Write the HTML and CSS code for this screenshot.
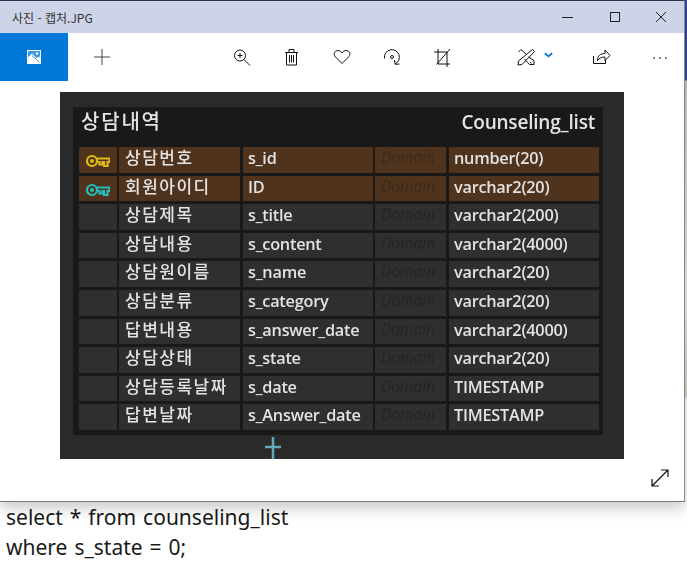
FILE: index.html
```html
<!DOCTYPE html>
<html lang="ko">
<head>
<meta charset="utf-8">
<title>사진 - 캡처.JPG</title>
<link rel="stylesheet" href="styles.css">
</head>
<body>
<div class="desktop">
  <main class="window">
    <header class="titlebar">
      <span class="app-title">사진 - 캡처.JPG</span>
      <div class="controls">
        <svg class="ctl" viewBox="0 0 20 20"><path d="M4 10.500h11"/></svg>
        <svg class="ctl" viewBox="0 0 20 20"><rect x="5.500" y="5.500" width="9" height="9"/></svg>
        <svg class="ctl" viewBox="0 0 20 20"><path d="M5 5l10 10M15 5L5 15"/></svg>
      </div>
    </header>
    <nav class="toolbar">
      <div class="tile">
        <svg class="tile-icon" viewBox="0 0 14 14"><rect width="14" height="14" fill="#fff"/><rect x="1" y="1" width="12" height="7" fill="#3f97e0"/><circle cx="10" cy="3.500" r="1.300" fill="#fff"/><path d="M1 7.500L5 3.500 9.500 8 13 6.500V13H1z" fill="#fff"/><path d="M5 5.500L12 12" stroke="#3f97e0" fill="none"/></svg>
      </div>
      <button class="btn btn-add"><svg class="ico thin" viewBox="0 0 20 20"><path d="M10 2v16M2 10h16"/></svg></button>
      <div class="group">
        <button class="btn"><svg class="ico" viewBox="0 0 20 20"><circle cx="8" cy="8.500" r="5.500"/><path d="M12 12.500L18 18.500M8 6v5M5.500 8.500h5"/></svg></button>
        <button class="btn"><svg class="ico" viewBox="0 0 20 20"><path d="M3 5.500h13M7 5.500v-3h5v3M4.500 5.500v12.500h10V5.500M7.500 8v7.500M9.500 8v7.500M11.500 8v7.500"/></svg></button>
        <button class="btn"><svg class="ico" viewBox="0 0 20 20"><path d="M10 16.500L3.500 10C1.500 8 2 5 4 4c2.200-1.100 4.500-.3 6 2 1.500-2.300 3.800-3.100 6-2 2 1 2.500 4 .5 6z"/></svg></button>
        <button class="btn"><svg class="ico" viewBox="0 0 20 20"><path d="M2.500 11.500A7.500 7.500 0 1 1 13 17M12.500 13l.7 4.300 4.300-.3"/><circle cx="10" cy="10" r="1.500"/></svg></button>
        <button class="btn"><svg class="ico" viewBox="0 0 20 20"><path d="M6 2v15h12M2 5h13v15M4.500 17.500L18 2"/></svg></button>
      </div>
      <div class="edit">
        <svg class="ico" viewBox="0 0 20 20"><path d="M2.500 5L5 2.500l5.500 5M12.500 10l5.500 3.500v4h-4.500L8.500 12M14 15l1.500 1.500M16.500 2.500L18.500 4.500 6 17.500 2 18l.5-4z"/></svg>
        <svg class="chev" viewBox="0 0 10 6"><path d="M1 1l4 3.500L9 1"/></svg>
      </div>
      <button class="btn"><svg class="ico" viewBox="0 0 20 20"><path d="M2.500 9v7.500h12V13M6.500 13.500c0-5 3-7 7.500-7V3l5 5.500-5 5v-3.500c-3.500 0-5.500 1-7.500 3.500z"/></svg></button>
      <button class="btn btn-more"><svg class="ico" viewBox="0 0 20 20"><path class="dots" d="M3.500 11H5M9.250 11h1.500M15 11h1.500"/></svg></button>
    </nav>
    <section class="canvas">
      <div class="shot">
        <div class="panel">
          <div class="panel-head"><span class="ko-title">상담내역</span><span class="en-title">Counseling_list</span></div>
          <div class="table">
            <div class="cell pk"><svg class="key key-gold" viewBox="0 0 24 14"><circle cx="6" cy="7" r="5"/><circle cx="6" cy="7" r="1"/><path d="M11 4.500H23.500v3.500h-2v4h-3.500v-4h-1.500v2.500h-3v-2.500h-2"/></svg></div>
            <div class="cell pk ko">상담번호</div><div class="cell pk en">s_id</div><div class="cell pk dom">Domain</div><div class="cell pk en">number(20)</div>
            <div class="cell pk"><svg class="key key-teal" viewBox="0 0 24 14"><circle cx="6" cy="7" r="5"/><circle cx="6" cy="7" r="1"/><path d="M11 4.500H23.500v3.500h-2v4h-3.500v-4h-1.500v2.500h-3v-2.500h-2"/></svg></div>
            <div class="cell pk ko">회원아이디</div><div class="cell pk en">ID</div><div class="cell pk dom">Domain</div><div class="cell pk en">varchar2(20)</div>
            <div class="cell"></div><div class="cell ko">상담제목</div><div class="cell en">s_title</div><div class="cell dom">Domain</div><div class="cell en">varchar2(200)</div>
            <div class="cell"></div><div class="cell ko">상담내용</div><div class="cell en">s_content</div><div class="cell dom">Domain</div><div class="cell en">varchar2(4000)</div>
            <div class="cell"></div><div class="cell ko">상담원이름</div><div class="cell en">s_name</div><div class="cell dom">Domain</div><div class="cell en">varchar2(20)</div>
            <div class="cell"></div><div class="cell ko">상담분류</div><div class="cell en">s_category</div><div class="cell dom">Domain</div><div class="cell en">varchar2(20)</div>
            <div class="cell"></div><div class="cell ko">답변내용</div><div class="cell en">s_answer_date</div><div class="cell dom">Domain</div><div class="cell en">varchar2(4000)</div>
            <div class="cell"></div><div class="cell ko">상담상태</div><div class="cell en">s_state</div><div class="cell dom">Domain</div><div class="cell en">varchar2(20)</div>
            <div class="cell"></div><div class="cell ko">상담등록날짜</div><div class="cell en">s_date</div><div class="cell dom">Domain</div><div class="cell en">TIMESTAMP</div>
            <div class="cell"></div><div class="cell ko">답변날짜</div><div class="cell en">s_Answer_date</div><div class="cell dom">Domain</div><div class="cell en">TIMESTAMP</div>
          </div>
        </div>
        <svg class="link" viewBox="0 0 16 22"><path d="M8 0v22M0 10h16"/></svg>
      </div>
      <div class="canvas-foot">
        <svg class="expand" viewBox="0 0 20 20"><path d="M2 18L18 2M11 2h7v7M2 11v7h7"/></svg>
      </div>
    </section>
  </main>
  <div class="backdrop"></div>
</div>
<p class="note">select * from counseling_list<br>where s_state = 0;</p>
</body>
</html>
```
FILE: styles.css
```css
* { box-sizing: border-box; }
html, body { margin: 0; padding: 0; }
body {
  width: 687px;
  height: 582px;
  overflow: hidden;
  background: #fff;
  font-family: "Noto Sans CJK KR", "Noto Sans", sans-serif;
}
.desktop { display: flex; height: 502px; }
.window {
  width: 685px;
  height: 502px;
  display: flex;
  flex-direction: column;
  background: #fff;
  border-top: 1px solid #2b3350;
  border-right: 1px solid #8a8a8a;
  border-bottom: 1px solid #7c7c7c;
  box-shadow: 0 6px 14px rgba(0, 0, 0, .22);
  position: relative;
  z-index: 1;
}
.backdrop {
  width: 2px;
  background: linear-gradient(#34479a 0, #34479a 80px, #c9c9c9 81px, #f0eeea 300px, #d8d0c8 395px, #fff 400px);
}
.titlebar {
  height: 32px;
  flex: none;
  display: flex;
  align-items: center;
  justify-content: space-between;
  background: #ced4e7;
  padding-left: 12px;
}
.app-title { font-size: 12px; color: #333; }
.controls { display: flex; gap: 26.500px; padding-right: 13px; align-items: center; }
.ctl { width: 20px; height: 20px; fill: none; stroke: #222; stroke-width: 1; }
.toolbar { height: 48px; flex: none; display: flex; align-items: center; }
.tile { width: 68px; height: 48px; background: #0078d7; display: flex; align-items: center; justify-content: center; }
.tile-icon { width: 14px; height: 14px; }
.btn {
  width: 50px;
  height: 48px;
  padding: 0;
  border: 0;
  background: none;
  display: flex;
  align-items: center;
  justify-content: center;
}
.btn-add { width: 68px; }
.group { display: flex; margin-left: 81px; }
.edit { width: 75px; margin-left: 34px; display: flex; align-items: center; gap: 8px; padding-left: 15px; }
.btn-more { margin-left: 10px; width: 48px; }
.ico { width: 20px; height: 20px; fill: none; stroke: #111; stroke-width: 1; flex: none; }
.thin { stroke: #444; }
.dots { stroke: #333; stroke-width: 1.500; }
.chev { width: 9px; height: 6px; margin-top: -5px; fill: none; stroke: #0078d7; stroke-width: 2; flex: none; }
.canvas { flex: 1; padding: 11px 0 0 60px; display: flex; flex-direction: column; }
.shot {
  width: 564px;
  height: 367px;
  background: #2a2a2a;
  padding: 15px 21px 0 13px;
  overflow: hidden;
  filter: blur(.5px);
}
.panel { height: 328px; background: #191919; padding: 0 4px 0 6px; }
.panel-head {
  height: 40px;
  display: flex;
  justify-content: space-between;
  align-items: flex-start;
  padding: 0 4px 0 2px;
  color: #e4e4e4;
}
.ko-title { font-size: 20px; font-weight: 500; letter-spacing: 1.800px; line-height: 28px; }
.en-title { font-family: "Open Sans", sans-serif; font-size: 19px; font-weight: 600; letter-spacing: -.2px; line-height: 30px; }
.table {
  display: grid;
  grid-template-columns: 37.500px 121px 130px 71px 150px;
  grid-auto-rows: 25.600px;
  gap: 3px 2.500px;
}
.cell { background: #2f2f2f; display: flex; align-items: flex-start; color: #e2e2e2; white-space: nowrap; }
.pk { background: #50331d; }
.ko { padding-left: 6px; font-size: 17px; font-weight: 500; letter-spacing: 1.500px; line-height: 20px; }
.en { padding-left: 5.500px; font-family: "Open Sans", sans-serif; font-size: 16.300px; font-weight: 600; letter-spacing: -.25px; line-height: 22px; }
.dom { padding-left: 6px; font-family: "Open Sans", sans-serif; font-size: 15.500px; font-style: italic; color: #252525; line-height: 20px; }
.pk.dom { color: #3d2a1a; }
.key { width: 24px; height: 14px; margin: 7px 0 0 6.500px; fill: none; stroke-width: 2.200; }
.key-gold { stroke: #dcb914; }
.key-teal { stroke: #25bdb8; }
.link { display: block; width: 16px; height: 22px; margin: 2px 0 0 192px; fill: none; stroke: #62a9bd; stroke-width: 2.500; }
.canvas-foot { display: flex; justify-content: flex-end; padding: 9px 14px 0 0; }
.expand { width: 20px; height: 20px; fill: none; stroke: #111; stroke-width: 1.200; }
.note { margin: 0; padding: 0 0 0 6px; font-family: "Noto Sans", sans-serif; font-size: 21px; word-spacing: 1.500px; line-height: 30px; color: #1a1a1a; }
```
